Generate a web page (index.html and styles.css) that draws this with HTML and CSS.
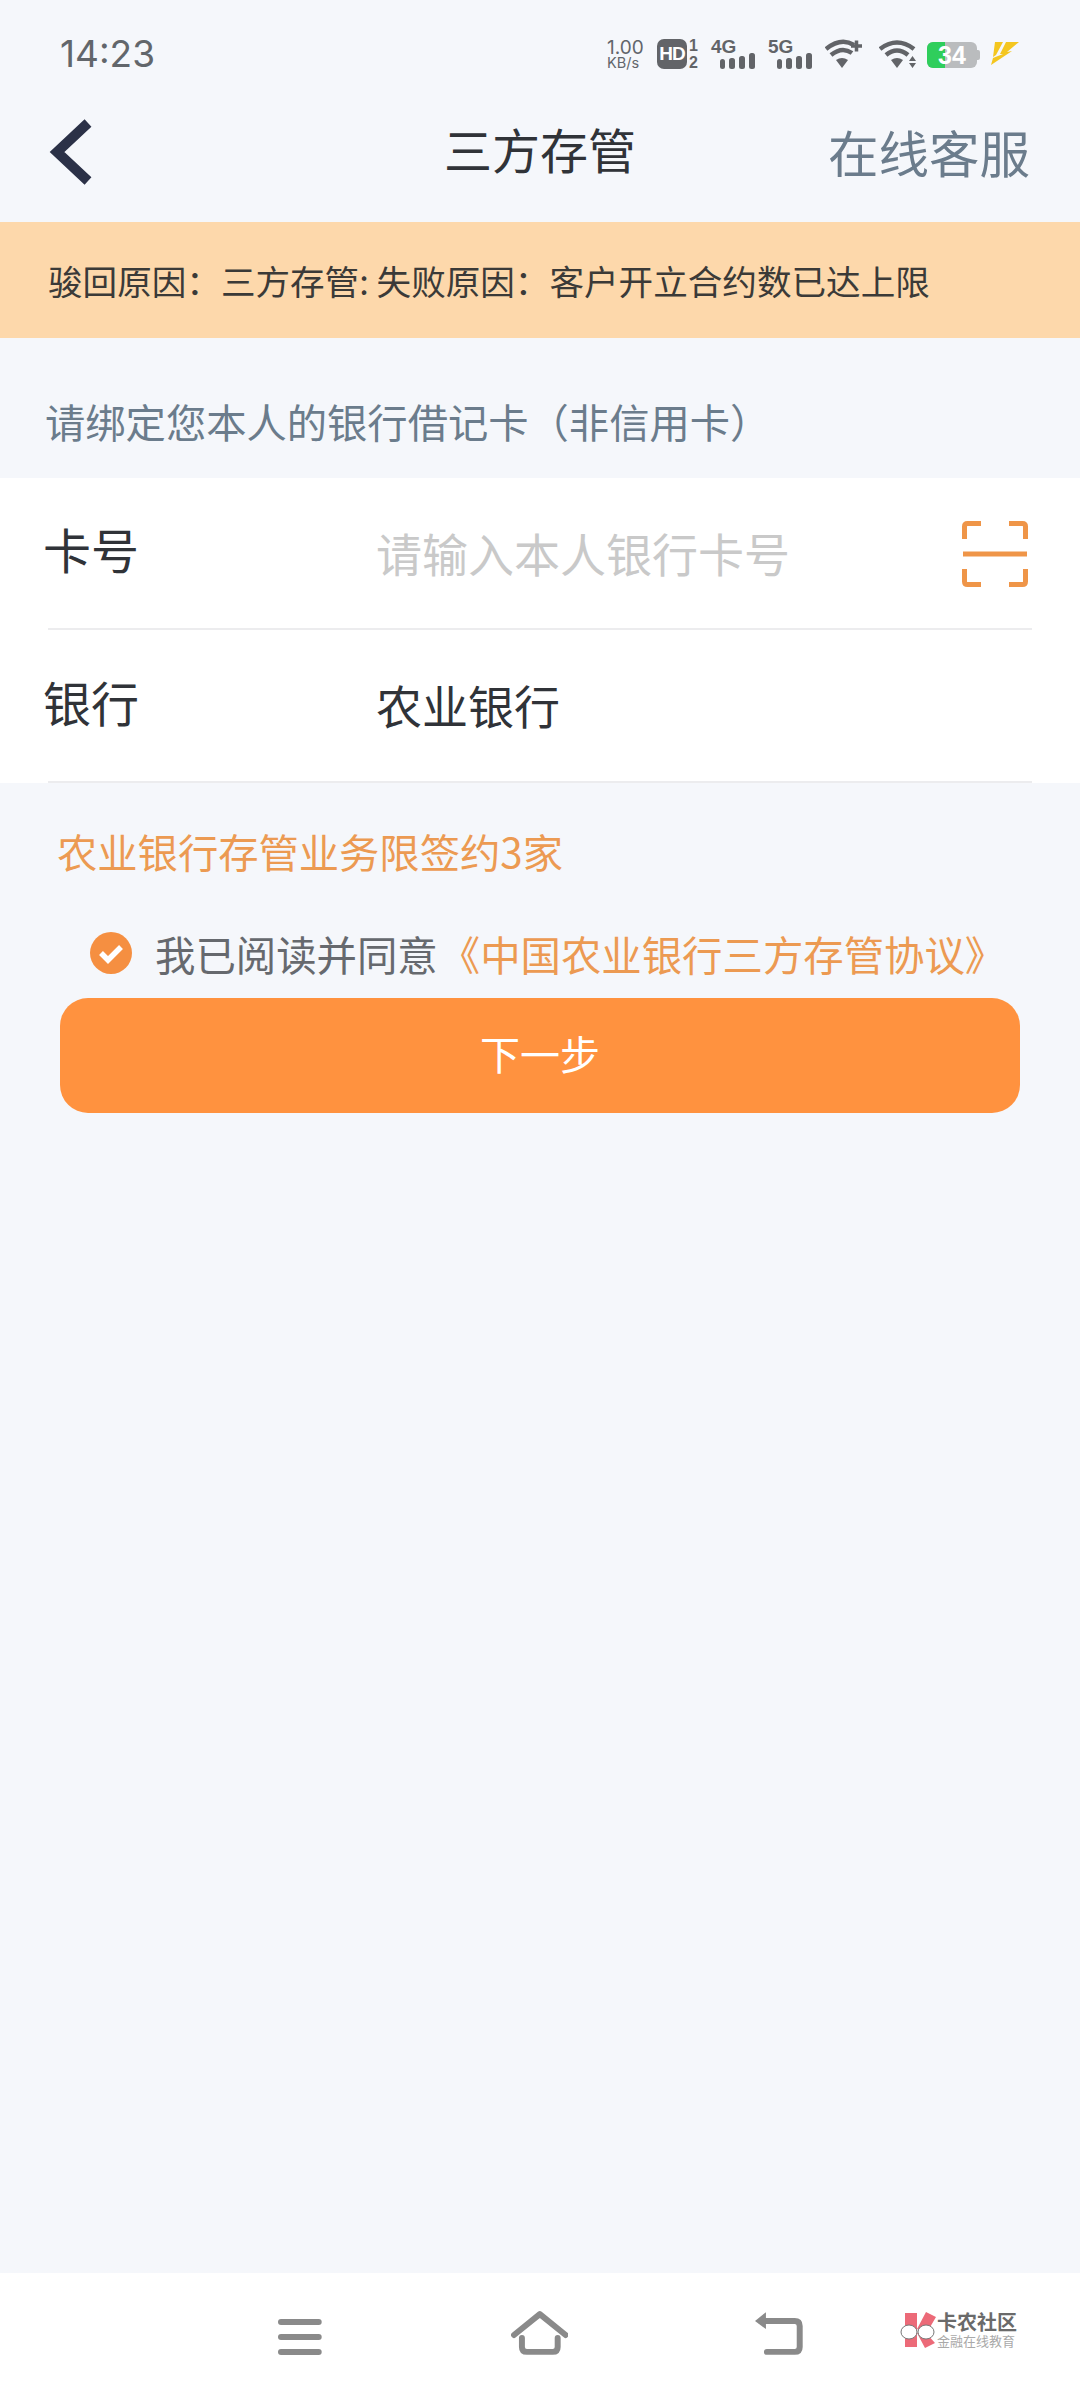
FILE: index.html
```html
<!DOCTYPE html>
<html lang="zh">
<head>
    <meta charset="utf-8">
    <title>三方存管</title>
    <link rel="stylesheet" href="styles.css">
</head>
<body>
    <div class="statusbar">
        <span class="time">14:23</span>
        <div class="status-icons">
            <div class="speed"><span>1.00</span><span class="speed-unit">KB/s</span></div>
            <div class="hd">
                <span class="hd-box">HD</span>
                <div class="sim"><span>1</span><span>2</span></div>
            </div>
            <div class="net">
                <svg width="48" height="30" viewBox="0 0 48 30">
                    <rect class="fill-grey" x="9" y="20" width="5" height="10" rx="2.5"/>
                    <rect class="fill-grey" x="18" y="19" width="6" height="11" rx="2.5"/>
                    <rect class="fill-grey" x="28" y="17" width="6" height="13" rx="2.5"/>
                    <rect class="fill-grey" x="38" y="14" width="6" height="16" rx="2.5"/>
                </svg>
                <span class="net-label">4G</span>
            </div>
            <div class="net">
                <svg width="48" height="30" viewBox="0 0 48 30">
                    <rect class="fill-grey" x="9" y="20" width="5" height="10" rx="2.5"/>
                    <rect class="fill-grey" x="18" y="19" width="6" height="11" rx="2.5"/>
                    <rect class="fill-grey" x="28" y="17" width="6" height="13" rx="2.5"/>
                    <rect class="fill-grey" x="38" y="14" width="6" height="16" rx="2.5"/>
                </svg>
                <span class="net-label">5G</span>
            </div>
            <svg width="45" height="30" viewBox="0 0 45 30">
                <path class="stroke-grey" d="M1 10Q16 -2 29 6M6 16Q17 7 27 14"/>
                <path class="fill-grey" d="M11 21Q17 17 23 21L17 29Z"/>
                <path class="stroke-grey plus" d="M26 7H37M31.500 1.500V12.500"/>
            </svg>
            <svg width="39" height="30" viewBox="0 0 39 30">
                <path class="stroke-grey" d="M1 10Q18 -3 35 10M7 16Q18 7 29 16"/>
                <path class="fill-grey" d="M12 21Q18 17 24 21L18 29ZM33.500 17L37 22H30ZM30 24H37L33.500 29Z"/>
            </svg>
            <div class="battery">
                <div class="battery-body"><div class="battery-level"></div><span class="battery-num">34</span></div>
                <div class="battery-tip"></div>
            </div>
            <svg class="ic-bolt" width="29" height="25" viewBox="0 0 29 25">
                <path class="fill-bolt" d="M5 1H13L6 14L3 16ZM16 1H29L17 11L22 10L1 24L3 17L13 13H10Z"/>
            </svg>
        </div>
    </div>

    <div class="navbar">
        <svg class="nav-back" width="50" height="70" viewBox="0 0 50 70">
            <path class="back-line" d="M44 7L13 36L44 65"/>
        </svg>
        <div class="nav-title">三方存管</div>
        <div class="nav-link">在线客服</div>
    </div>

    <div class="notice">骏回原因：三方存管: 失败原因：客户开立合约数已达上限</div>

    <div class="hint">请绑定您本人的银行借记卡（非信用卡）</div>

    <div class="card">
        <div class="row">
            <span class="row-label">卡号</span>
            <span class="row-value placeholder">请输入本人银行卡号</span>
            <svg class="scan" width="66" height="66" viewBox="0 0 66 66">
                <path class="scan-line" d="M2.500 18V5.500Q2.500 2.500 5.500 2.500H19M47 2.500H60.500Q63.500 2.500 63.500 5.500V18M2.500 48V60.500Q2.500 63.500 5.500 63.500H19M47 63.500H60.500Q63.500 63.500 63.500 60.500V48M1 33H65"/>
            </svg>
        </div>
        <div class="row">
            <span class="row-label">银行</span>
            <span class="row-value">农业银行</span>
        </div>
    </div>

    <div class="main">
        <div class="limit">农业银行存管业务限签约3家</div>
        <div class="agree">
            <svg class="agree-check" width="42" height="42" viewBox="0 0 42 42">
                <circle class="check-bg" cx="21" cy="21" r="21"/>
                <path class="check-mark" d="M11 21L18 28L31 15"/>
            </svg>
            <span>我已阅读并同意</span><span class="agree-link">《中国农业银行三方存管协议》</span>
        </div>
        <div class="next-btn">下一步</div>
    </div>

    <div class="bottombar">
        <svg class="sys-menu" width="44" height="36" viewBox="0 0 44 36">
            <rect width="44" height="6" rx="3"/>
            <rect y="15" width="44" height="6" rx="3"/>
            <rect y="30" width="44" height="6" rx="3"/>
        </svg>
        <svg class="sys-home" width="58" height="44" viewBox="0 0 58 44">
            <path class="sys-line" d="M3 24L29 3L55 24M11 27V36Q11 41 16 41H42Q47 41 47 36V27"/>
        </svg>
        <svg class="sys-back" width="48" height="43" viewBox="0 0 48 43">
            <path class="sys-line" d="M6 9H40Q45 9 45 14V35Q45 40 40 40H12"/>
            <path class="sys-fill" d="M0 9L11 0V17Z"/>
        </svg>
        <div class="logo">
            <svg width="37" height="36" viewBox="0 0 37 36">
                <path class="logo-red" d="M5 1H17V35H5ZM26 0L36 5L26 22L17 17ZM17 21H26L35 31L25 36Z"/>
                <ellipse class="logo-glass" cx="9" cy="20" rx="8" ry="7"/>
                <ellipse class="logo-glass" cx="26" cy="20" rx="8" ry="7"/>
            </svg>
            <div class="logo-text">
                <span class="logo-name">卡农社区</span>
                <span class="logo-sub">金融在线教育</span>
            </div>
        </div>
    </div>
</body>
</html>
```

FILE: styles.css
```css
* {
    box-sizing: border-box;
}
html, body {
    margin: 0;
    padding: 0;
}
body {
    width: 1080px;
    height: 2400px;
    display: flex;
    flex-direction: column;
    background-color: #f5f7fb;
    font-family: "Noto Sans CJK SC", "Noto Sans", sans-serif;
    color: #303338;
    overflow: hidden;
}

/* status bar */
.statusbar {
    height: 100px;
    flex: none;
    display: flex;
    align-items: flex-start;
    justify-content: space-between;
    padding: 30px 61px 0 60px;
}
.time {
    font-family: Inter, Roboto, sans-serif;
    font-size: 37px;
    line-height: 48px;
    color: #62666b;
}
.status-icons {
    display: flex;
    gap: 9px;
    padding-top: 9px;
}
.speed {
    width: 41px;
    height: 30px;
    display: flex;
    flex-direction: column;
    font-family: Inter, Roboto, sans-serif;
    font-size: 19px;
    line-height: 17px;
    color: #62666b;
}
.speed-unit {
    font-size: 14.5px;
    line-height: 14px;
}
.hd {
    width: 45px;
    height: 30px;
    display: flex;
    gap: 2px;
    font-family: "Liberation Sans", sans-serif;
    font-weight: 700;
}
.hd-box {
    width: 30px;
    height: 30px;
    border-radius: 7px;
    background-color: #626468;
    color: #fff;
    font-size: 19px;
    line-height: 30px;
    letter-spacing: -1px;
    text-align: center;
}
.sim {
    display: flex;
    flex-direction: column;
    justify-content: space-between;
    font-size: 16px;
    line-height: 13px;
    color: #626468;
}
.net {
    width: 48px;
    height: 30px;
    position: relative;
}
.net-label {
    position: absolute;
    left: 0;
    top: 0;
    font-family: "Liberation Sans", sans-serif;
    font-weight: 700;
    font-size: 19px;
    line-height: 15px;
    color: #626468;
}
.fill-grey {
    fill: #626468;
}
.stroke-grey {
    fill: none;
    stroke: #626468;
    stroke-width: 4.500;
}
.plus {
    stroke-width: 3.500;
}
.battery {
    display: flex;
    align-items: center;
    width: 53px;
    height: 26px;
    margin-top: 3px;
}
.battery-body {
    width: 50px;
    height: 26px;
    border-radius: 6px;
    background-color: #babcbe;
    display: flex;
    justify-content: center;
    align-items: center;
    position: relative;
    overflow: hidden;
}
.battery-level {
    position: absolute;
    left: 0;
    top: 0;
    bottom: 0;
    width: 18px;
    background-color: #2fce5c;
}
.battery-num {
    position: relative;
    font-family: "Liberation Sans", sans-serif;
    font-weight: 700;
    font-size: 25px;
    line-height: 26px;
    color: #fff;
}
.battery-tip {
    width: 3px;
    height: 10px;
    background-color: #babcbe;
    border-radius: 0 2px 2px 0;
}
.ic-bolt {
    margin: 2px 0 0 1px;
}
.fill-bolt {
    fill: #f4c61f;
}

/* nav */
.navbar {
    height: 122px;
    flex: none;
    display: flex;
    align-items: center;
    position: relative;
    padding: 0 50px 20px 44px;
    justify-content: space-between;
}
.back-line {
    fill: none;
    stroke: #2b3147;
    stroke-width: 10;
}
.nav-title {
    position: absolute;
    left: 0;
    right: 0;
    top: 16px;
    text-align: center;
    font-size: 48px;
    line-height: 64px;
}
.nav-link {
    font-size: 50.500px;
    line-height: 66px;
    color: #6b7c8c;
}

.notice {
    height: 116px;
    flex: none;
    display: flex;
    align-items: center;
    padding-left: 48px;
    background-color: #fdd8ab;
    font-size: 34.600px;
    white-space: pre;
    color: #3b3a38;
}
.hint {
    height: 140px;
    flex: none;
    padding: 57px 0 0 45px;
    font-size: 40.300px;
    line-height: 52px;
    color: #6b7c8c;
}

/* form card */
.card {
    background-color: #fff;
    flex: none;
}
.row {
    height: 152px;
    margin: 0 48px;
    display: flex;
    align-items: center;
    border-bottom: 2px solid #ececee;
    position: relative;
}
.row + .row {
    height: 153px;
}
.row-label {
    width: 333px;
    margin-left: -5px;
    padding-bottom: 10px;
    font-size: 48px;
    line-height: 60px;
    flex: none;
}
.row-value {
    padding-bottom: 3px;
    font-size: 46px;
    line-height: 60px;
    flex: 1;
}
.placeholder {
    color: #c9c9c9;
}
.scan {
    margin: 2px 4px 0 0;
    flex: none;
}
.scan-line {
    fill: none;
    stroke: #ef9548;
    stroke-width: 5;
}

.main {
    flex: 1;
    display: flex;
    flex-direction: column;
}
.limit {
    margin: 42px 0 0 57px;
    font-size: 40.300px;
    line-height: 52px;
    color: #ec9a52;
}
.agree {
    margin: 51px 0 0 90px;
    height: 50px;
    display: flex;
    align-items: center;
    font-size: 40.400px;
    color: #66696e;
}
.agree-check {
    margin-right: 23px;
    flex: none;
}
.check-bg {
    fill: #f58f41;
}
.check-mark {
    fill: none;
    stroke: #fff;
    stroke-width: 5.500;
}
.agree-link {
    margin-left: 2px;
    color: #ec9a52;
}
.next-btn {
    margin: 20px 60px 0 60px;
    height: 115px;
    padding-bottom: 5px;
    border-radius: 28px;
    background-color: #ff923f;
    display: flex;
    align-items: center;
    justify-content: center;
    font-size: 40px;
    color: #fff;
}

/* bottom system bar */
.bottombar {
    height: 127px;
    flex: none;
    background-color: #fff;
    position: relative;
    padding: 0 63px 0 278px;
    display: flex;
    align-items: flex-start;
}
.sys-menu {
    margin-top: 46px;
    fill: #8a8a8a;
}
.sys-home {
    margin: 38px 0 0 189px;
}
.sys-back {
    margin: 39px 0 0 187px;
}
.sys-line {
    fill: none;
    stroke: #8a8a8a;
    stroke-width: 6;
    stroke-linecap: round;
    stroke-linejoin: round;
}
.sys-fill {
    fill: #8a8a8a;
}
.logo {
    margin: 39px 0 0 97px;
    display: flex;
    flex: none;
}
.logo-red {
    fill: #ec6a78;
}
.logo-glass {
    fill: #fff;
    stroke: #777;
    stroke-width: 1;
}
.logo-text {
    display: flex;
    flex-direction: column;
    margin-top: -2px;
}
.logo-name {
    font-size: 20px;
    font-weight: 700;
    line-height: 24px;
    color: #6a6a6a;
    white-space: nowrap;
}
.logo-sub {
    font-size: 13px;
    line-height: 14px;
    color: #a9a9a9;
    white-space: nowrap;
}
```
